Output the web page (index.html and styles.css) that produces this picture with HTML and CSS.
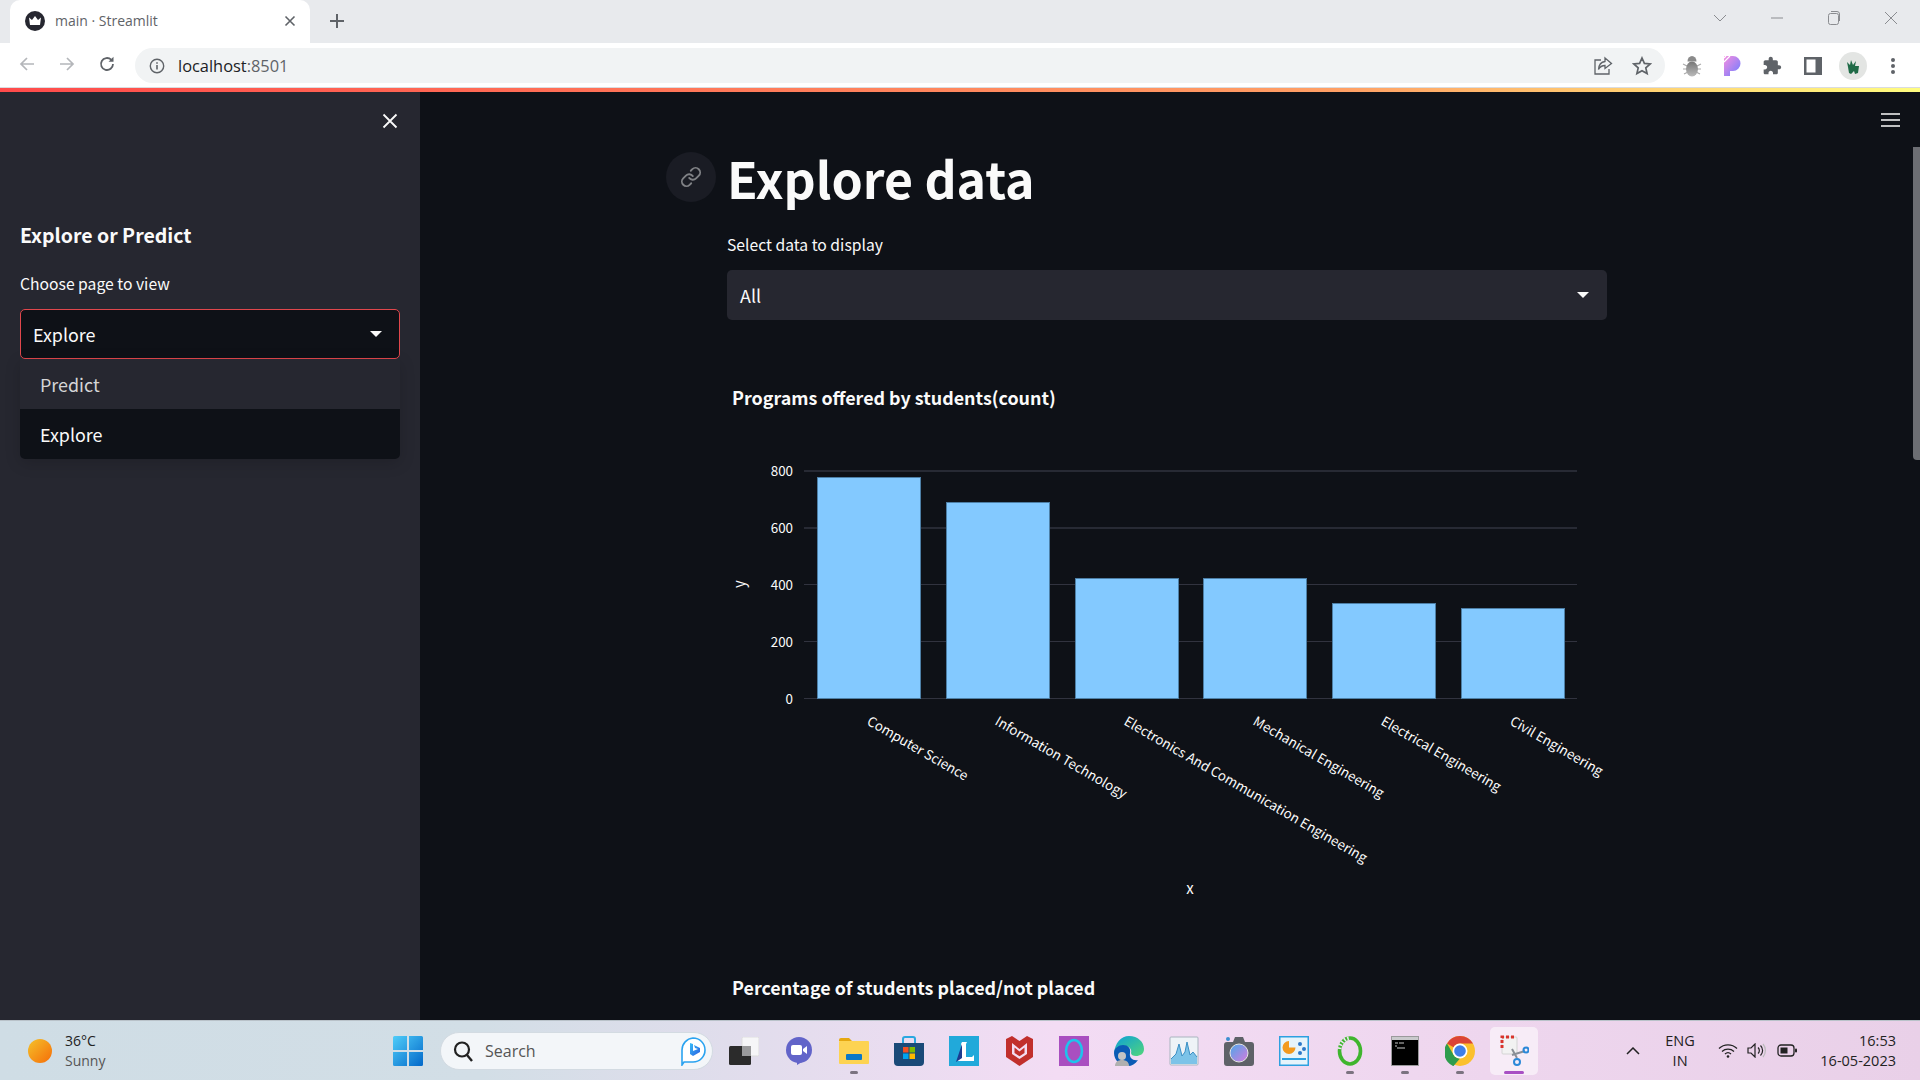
FILE: index.html
```html
<!DOCTYPE html>
<html lang="en">
<head>
  <meta charset="UTF-8">
  <title>main · Streamlit</title>
  <link rel="stylesheet" href="styles.css">
</head>
<body>
<div class="screen">

  <!-- Tab strip -->
  <div class="tabstrip">
    <div class="tab">
      <svg class="favicon" width="20" height="20" viewBox="0 0 20 20"><circle cx="10" cy="10" r="10" fill="#262730"/><path d="M4 6.500l3 2.600L10 5l3 4.100 3-2.600-1 7.500H5z" fill="#fff"/></svg>
      <span class="tab-title">main · Streamlit</span>
      <svg class="tab-close" width="12" height="12" viewBox="0 0 12 12"><path d="M1.500 1.500l9 9M10.500 1.500l-9 9" stroke="#5f6368" stroke-width="1.600"/></svg>
    </div>
    <svg class="tab-new" width="16" height="16" viewBox="0 0 16 16"><path d="M8 1v14M1 8h14" stroke="#5f6368" stroke-width="2"/></svg>
    <div class="window-btns">
      <svg width="14" height="8" viewBox="0 0 14 8"><path d="M1 1l6 6 6-6" fill="none" stroke="#8a8c90"/></svg>
      <svg width="14" height="14" viewBox="0 0 14 14"><path d="M1 7h12" stroke="#8a8c90"/></svg>
      <svg width="14" height="16" viewBox="0 0 14 16"><rect x="1.500" y="3.500" width="10" height="11" rx="2" fill="none" stroke="#8a8c90"/><path d="M4 1.500h6a2.500 2.500 0 0 1 2.500 2.500v7" fill="none" stroke="#8a8c90"/></svg>
      <svg width="14" height="14" viewBox="0 0 14 14"><path d="M1 1l12 12M13 1L1 13" stroke="#8a8c90"/></svg>
    </div>
  </div>

  <!-- Address bar row -->
  <div class="toolbar">
    <div class="nav-btns">
      <svg width="18" height="18" viewBox="0 0 18 18"><path d="M16 9H3M9 3L3 9l6 6" fill="none" stroke="#b4b6ba" stroke-width="1.700"/></svg>
      <svg width="18" height="18" viewBox="0 0 18 18"><path d="M2 9h13M9 3l6 6-6 6" fill="none" stroke="#b4b6ba" stroke-width="1.700"/></svg>
      <svg width="18" height="18" viewBox="0 0 18 18"><path d="M15 9a6 6 0 1 1-1.800-4.300" fill="none" stroke="#5f6368" stroke-width="1.800"/><path d="M15.500 1.800v5h-5z" fill="#5f6368"/></svg>
    </div>
    <div class="omnibox">
      <svg width="16" height="16" viewBox="0 0 16 16"><circle cx="8" cy="8" r="6.700" fill="none" stroke="#5f6368" stroke-width="1.400"/><path d="M8 7v4.500M8 4.200v1.600" stroke="#5f6368" stroke-width="1.600"/></svg>
      <span class="url">localhost<span class="url-port">:8501</span></span>
      <svg class="omni-share" width="20" height="20" viewBox="0 0 20 20"><path d="M8 4H2v14h14v-5" fill="none" stroke="#5f6368" stroke-width="1.300"/><path d="M12 2l6.500 5.500L12 12.500V9.500c-3 0-5 1-6.500 4 .3-4.500 2.500-7.500 6.500-8z" fill="none" stroke="#5f6368" stroke-width="1.300"/></svg>
      <svg class="omni-star" width="20" height="20" viewBox="0 0 20 20"><path d="M10 2l2.400 5.400 5.800.6-4.400 3.900 1.300 5.700L10 14.700 4.900 17.600l1.300-5.700L1.800 8l5.800-.6z" fill="none" stroke="#5f6368" stroke-width="1.700"/></svg>
    </div>
    <div class="ext-btns">
      <div class="ext-slot"><svg width="20" height="22" viewBox="0 0 20 22"><defs><linearGradient id="bug" x1="0" y1="0" x2="0" y2="1"><stop offset="0" stop-color="#777"/><stop offset="1" stop-color="#bbb"/></linearGradient></defs><path d="M1 9l4 2M19 9l-4 2M1 14h4M19 14h-4M2 19l4-2M18 19l-4-2" stroke="#aaa" stroke-width="1.200"/><ellipse cx="10" cy="14" rx="6" ry="7.500" fill="url(#bug)"/><path d="M5.500 6.500a4.500 5.500 0 0 1 9 0z" fill="#8a8a8a"/></svg></div>
      <div class="ext-slot"><svg width="18" height="22" viewBox="0 0 18 22"><defs><linearGradient id="pp" x1="0" y1="0" x2="1" y2="1"><stop offset="0" stop-color="#f78ee0"/><stop offset="1" stop-color="#6b7cff"/></linearGradient></defs><path d="M1 1h9a7.500 7.500 0 0 1 0 15H7v5H1z" fill="url(#pp)"/><path d="M1 7l6-6M1 3l2-2" stroke="#fff" stroke-width="1.200"/></svg></div>
      <div class="ext-slot"><svg width="20" height="20" viewBox="0 0 24 24"><path d="M20.500 11H19V7c0-1.100-.9-2-2-2h-4V3.500C13 2.120 11.880 1 10.500 1S8 2.120 8 3.500V5H4c-1.100 0-1.990.9-1.990 2v3.800H3.500c1.490 0 2.700 1.210 2.700 2.700s-1.210 2.700-2.700 2.700H2V20c0 1.100.9 2 2 2h3.800v-1.500c0-1.490 1.210-2.700 2.700-2.700 1.490 0 2.700 1.210 2.700 2.700V22H17c1.100 0 2-.9 2-2v-4h1.500c1.380 0 2.500-1.120 2.500-2.500S21.880 11 20.500 11z" fill="#5f6368"/></svg></div>
      <div class="ext-slot"><svg width="18" height="18" viewBox="0 0 18 18"><rect width="18" height="18" fill="#5f6368"/><rect x="2.500" y="2.500" width="9" height="13" fill="#fff"/></svg></div>
      <div class="ext-slot"><svg width="28" height="28" viewBox="0 0 28 28"><circle cx="14" cy="14" r="14" fill="#e3e5e3"/><path d="M8 10l3 3 1-5 2 5 3-4-1 5 4 0-1 7-3 1-1-3-3 3-2-1-1-6z" fill="#1f6b47"/></svg></div>
      <div class="ext-slot"><svg width="6" height="18" viewBox="0 0 6 18"><circle cx="3" cy="3" r="2" fill="#5f6368"/><circle cx="3" cy="9" r="2" fill="#5f6368"/><circle cx="3" cy="15" r="2" fill="#5f6368"/></svg></div>
    </div>
  </div>
  <div class="decoration"></div>

  <!-- Streamlit app -->
  <div class="app">
    <aside class="sidebar">
      <div class="sidebar-top">
        <svg width="16" height="16" viewBox="0 0 16 16"><path d="M1.500 1.500l13 13M14.500 1.500l-13 13" stroke="#fafafa" stroke-width="1.800"/></svg>
      </div>
      <h2 class="side-title">Explore or Predict</h2>
      <label class="field-label">Choose page to view</label>
      <div class="select select-focus">
        <span>Explore</span>
        <span class="caret"></span>
      </div>
      <div class="menu">
        <div class="menu-item menu-dim">Predict</div>
        <div class="menu-item menu-active">Explore</div>
      </div>
    </aside>

    <main class="main">
      <svg class="hamburger" width="19" height="14" viewBox="0 0 19 14"><path d="M0 1h19M0 7h19M0 13h19" stroke="#fafafa" stroke-width="1.700"/></svg>
      <div class="scroll-thumb"></div>

      <div class="content">
        <div class="heading-row">
          <div class="anchor">
            <svg width="22" height="22" viewBox="0 0 24 24" fill="none" stroke="#808286" stroke-width="2" stroke-linecap="round"><path d="M10 13a5 5 0 0 0 7.540.54l3-3a5 5 0 0 0-7.070-7.070l-1.720 1.710"/><path d="M14 11a5 5 0 0 0-7.540-.54l-3 3a5 5 0 0 0 7.070 7.070l1.710-1.710"/></svg>
          </div>
          <h1>Explore data</h1>
        </div>
        <label class="field-label">Select data to display</label>
        <div class="select select-plain">
          <span>All</span>
          <span class="caret"></span>
        </div>

        <h4 class="chart-title">Programs offered by students(count)</h4>
        <svg class="chart" width="880" height="540" viewBox="727 420 880 540">
          <g stroke="#31333f">
            <path d="M804 470h773M804 527h773" stroke-width="1.400"/>
            <path d="M804 583.500h773M804 640.500h773M804 697.500h773"/>
          </g>
          <g fill="#83c9ff" stroke="#4d7fa6" stroke-width="1">
            <rect x="817.500" y="476.500" width="103" height="221"/>
            <rect x="946.500" y="501.500" width="103" height="196"/>
            <rect x="1075.500" y="577.500" width="103" height="120"/>
            <rect x="1203.500" y="577.500" width="103" height="120"/>
            <rect x="1332.500" y="602.500" width="103" height="95"/>
            <rect x="1461.500" y="607.500" width="103" height="90"/>
          </g>
          <g class="tick" text-anchor="end">
            <text x="793" y="475">800</text>
            <text x="793" y="532">600</text>
            <text x="793" y="589">400</text>
            <text x="793" y="646">200</text>
            <text x="793" y="703">0</text>
          </g>
          <g class="tick">
            <text transform="translate(866 723) rotate(30)">Computer Science</text>
            <text transform="translate(994 723) rotate(30)">Information Technology</text>
            <text transform="translate(1123 723) rotate(30)">Electronics And Communication Engineering</text>
            <text transform="translate(1252 723) rotate(30)">Mechanical Engineering</text>
            <text transform="translate(1380 723) rotate(30)">Electrical Engineering</text>
            <text transform="translate(1509 723) rotate(30)">Civil Engineering</text>
          </g>
          <text class="axis-title" x="1190" y="893" text-anchor="middle">x</text>
          <text class="axis-title" transform="translate(745 583) rotate(-90)" text-anchor="middle">y</text>
        </svg>
        <h4 class="chart-title chart-title-next">Percentage of students placed/not placed</h4>
      </div>
    </main>
  </div>

  <!-- Windows taskbar -->
  <footer class="taskbar">
    <div class="weather">
      <svg width="24" height="24" viewBox="0 0 24 24"><defs><linearGradient id="sun" x1="0" y1="0" x2="1" y2="1"><stop offset="0" stop-color="#f4c22b"/><stop offset="1" stop-color="#f66d08"/></linearGradient></defs><circle cx="12" cy="12" r="12" fill="url(#sun)"/></svg>
      <div class="weather-text">
        <div>36°C</div>
        <div class="weather-sub">Sunny</div>
      </div>
    </div>

    <div class="task-center">
      <svg class="start" width="30" height="30" viewBox="0 0 30 30"><defs><linearGradient id="win" x1="0" y1="0" x2="1" y2="1"><stop offset="0" stop-color="#4fcdf9"/><stop offset="1" stop-color="#0368c9"/></linearGradient></defs><path d="M0 1.500A1.500 1.500 0 0 1 1.500 0H14v14H0zM16 0h12.500A1.500 1.500 0 0 1 30 1.500V14H16zM0 16h14v14H1.500A1.500 1.500 0 0 1 0 28.500zM16 16h14v12.500a1.500 1.500 0 0 1-1.500 1.500H16z" fill="url(#win)"/></svg>

      <div class="search">
        <svg width="20" height="22" viewBox="0 0 20 22"><circle cx="9" cy="9.500" r="7" fill="none" stroke="#222" stroke-width="2.200"/><path d="M14 15l5 6" stroke="#222" stroke-width="2.400"/></svg>
        <span>Search</span>
        <svg class="bing" width="26" height="30" viewBox="0 0 26 30"><defs><linearGradient id="bingg" x1="0" y1="0" x2="1" y2="1"><stop offset="0" stop-color="#37bdf8"/><stop offset="1" stop-color="#2a5fe0"/></linearGradient></defs><path d="M13 2a12 12 0 0 1 0 24H4l-2 3V14A12 12 0 0 1 13 2z" fill="#fff" stroke="#2aa3f0" stroke-width="1.600"/><path d="M10 7l3 1v7l5-2-3-1-1-3 6 3v4l-7 4-3-2z" fill="url(#bingg)"/></svg>
      </div>

      <div class="task-icon"><svg width="30" height="28" viewBox="0 0 30 28"><rect x="13" y="0" width="17" height="19" rx="1.500" fill="#f6f6f8" stroke="#ddd"/><rect x="0" y="9" width="22" height="19" rx="1.500" fill="#2b2b2b"/><rect x="13" y="9" width="9" height="10" fill="#9a9a9c"/></svg></div>
      <div class="task-icon"><svg width="30" height="28" viewBox="0 0 30 28"><circle cx="15" cy="13" r="13" fill="#6264c9"/><path d="M13 25l0 3 5-3z" fill="#6264c9"/><rect x="7" y="8" width="11" height="10" rx="2" fill="#fff"/><path d="M19 12l4-3v8l-4-3z" fill="#fff"/></svg></div>
      <div class="task-icon running"><svg width="30" height="27" viewBox="0 0 30 27"><path d="M0 3a2 2 0 0 1 2-2h8l3 3H0z" fill="#e6a810"/><rect y="4" width="30" height="23" rx="1" fill="#fdd352"/><rect x="7" y="17" width="16" height="6" rx="1" fill="#0b78c8"/></svg></div>
      <div class="task-icon"><svg width="30" height="30" viewBox="0 0 30 30"><path d="M9 7V3a2 2 0 0 1 2-2h8a2 2 0 0 1 2 2v4" fill="none" stroke="#2aa8e0" stroke-width="2"/><path d="M0 7h30v19a4 4 0 0 1-4 4H4a4 4 0 0 1-4-4z" fill="#1a4a78"/><rect x="9" y="11" width="5.500" height="5.500" fill="#f25022"/><rect x="15.500" y="11" width="5.500" height="5.500" fill="#7fba00"/><rect x="9" y="17.500" width="5.500" height="5.500" fill="#00a4ef"/><rect x="15.500" y="17.500" width="5.500" height="5.500" fill="#ffb900"/></svg></div>
      <div class="task-icon"><svg width="30" height="30" viewBox="0 0 30 30"><rect width="30" height="30" fill="#21a9da"/><path d="M13 6h5l-1 2v13h6l2-2v6H8l4-3V8z" fill="#fff"/><path d="M13 8v14l-6 4z" fill="#1c3b8f"/></svg></div>
      <div class="task-icon"><svg width="27" height="30" viewBox="0 0 27 30"><path d="M0 3l6-3 7.500 5L21 0l6 3v18l-13.500 9L0 21z" fill="#c12f2c"/><path d="M6 7v11l7.500 5 7.500-5V7l-7.500 6z" fill="#f3dcf1"/><path d="M8.500 11.500v5.500l5 3.300 5-3.300v-5.500l-5 4z" fill="#c12f2c"/></svg></div>
      <div class="task-icon"><svg width="30" height="30" viewBox="0 0 30 30"><rect width="30" height="30" fill="#a94fc0"/><ellipse cx="15" cy="15" rx="8" ry="11" fill="none" stroke="#1fc3ec" stroke-width="2.600"/></svg></div>
      <div class="task-icon"><svg width="30" height="30" viewBox="0 0 30 30"><defs><linearGradient id="edge1" x1="0" y1="0" x2="1" y2="1"><stop offset="0" stop-color="#0c9fd8"/><stop offset="1" stop-color="#52d67a"/></linearGradient></defs><path d="M15 0c9 0 15 6 15 13 0 5-4 7-8 7-3 0-5-1-5-3 1-3-1-7-6-7-5 0-9 3-11 7C1 7 7 0 15 0z" fill="url(#edge1)"/><path d="M0 17c0-5 5-8 9-8 5 0 8 3 7 8-1 5 3 8 8 7-3 4-6 6-10 6C6 30 0 24 0 17z" fill="#0b5bb5"/><circle cx="8" cy="20" r="4" fill="#c4c4c4"/><path d="M1 30c0-4 3-6 7-6s7 2 7 6z" fill="#b0b0b0"/></svg></div>
      <div class="task-icon"><svg width="30" height="30" viewBox="0 0 30 30"><rect x="1" y="1" width="28" height="28" rx="1" fill="#eef3f7" stroke="#a9b4bf"/><path d="M2 23l5-5 3-10 3 12 3-4 2-10 3 13 3-3 4 5v7H2z" fill="#7cc3e8"/><path d="M2 23l5-5 3-10 3 12 3-4 2-10 3 13 3-3 4 5" fill="none" stroke="#3b8fc4"/></svg></div>
      <div class="task-icon"><svg width="30" height="30" viewBox="0 0 30 30"><defs><linearGradient id="lens" x1="0" y1="0" x2="1" y2="1"><stop offset="0" stop-color="#4aa8e8"/><stop offset="1" stop-color="#d77ae0"/></linearGradient></defs><path d="M3 6h6l2-5h8l2 5h6a3 3 0 0 1 3 3v18a3 3 0 0 1-3 3H3a3 3 0 0 1-3-3V9a3 3 0 0 1 3-3z" fill="#5e6268"/><circle cx="4" cy="3" r="2" fill="#3b8fd0"/><circle cx="15" cy="17" r="9" fill="url(#lens)" stroke="#e5e5e5"/></svg></div>
      <div class="task-icon"><svg width="30" height="30" viewBox="0 0 30 30"><rect x="0.500" y="0.500" width="29" height="29" fill="#e6f4fb" stroke="#2da0e0" stroke-width="2"/><path d="M10 5a6.500 6.500 0 1 0 6.500 6.500H10z" fill="#f39a1e"/><rect x="3" y="22" width="24" height="2" fill="#2da0e0"/><circle cx="21" cy="8" r="2" fill="#2d78c8"/><circle cx="25" cy="13" r="2" fill="#2d78c8"/><circle cx="21" cy="17" r="2" fill="#2d78c8"/></svg></div>
      <div class="task-icon running"><svg width="26" height="30" viewBox="0 0 26 30"><ellipse cx="13" cy="15" rx="10.500" ry="13" fill="none" stroke="#3fb52e" stroke-width="3.600"/><path d="M2.500 13A11 13 0 0 1 12 2" fill="none" stroke="#efe3f2" stroke-width="3.800" stroke-dasharray="1.600 1.800"/></svg></div>
      <div class="task-icon running"><svg width="28" height="30" viewBox="0 0 28 30"><rect x="0.500" y="0.500" width="27" height="29" fill="#000" stroke="#9a9a9c"/><rect x="1" y="1" width="26" height="3" fill="#c9c9cc"/><path d="M4 7h3M8 7h5M4 10h2M6 12h8" stroke="#c8c8c8"/></svg></div>
      <div class="task-icon running"><svg width="30" height="30" viewBox="0 0 30 30"><circle cx="15" cy="15" r="15" fill="#fbc02d"/><path d="M15 0a15 15 0 0 1 13 7.500H15a7.500 7.500 0 0 0-6.500 3.750L2 7.500A15 15 0 0 1 15 0z" fill="#db4437"/><path d="M2 7.500l6.500 11.250A7.500 7.500 0 0 0 15 22.500L8.500 30h-.5A15 15 0 0 1 2 7.500z" fill="#2e9c4d"/><circle cx="15" cy="15" r="7.500" fill="#fff"/><circle cx="15" cy="15" r="5.800" fill="#3f7fe8"/></svg></div>
      <div class="task-icon snip">
        <svg width="30" height="32" viewBox="0 0 30 32"><rect x="3" y="2" width="15" height="17" rx="1" fill="#f2f2f2" stroke="#d4d4d4"/><path d="M3 13V2h14" fill="none" stroke="#d8342c" stroke-width="3" stroke-dasharray="3 2"/><path d="M13 14l5 9M13 20l13-4" stroke="#8a8f96" stroke-width="2"/><circle cx="27" cy="15" r="2.500" fill="none" stroke="#2b88d8" stroke-width="2"/><circle cx="18" cy="27" r="3" fill="none" stroke="#2b88d8" stroke-width="2"/></svg>
      </div>
    </div>

    <div class="tray">
      <svg class="tray-up" width="14" height="8" viewBox="0 0 14 8"><path d="M1 7l6-6 6 6" fill="none" stroke="#222" stroke-width="1.500"/></svg>
      <div class="lang">ENG<br>IN</div>
      <svg class="tray-wifi" width="20" height="15" viewBox="0 0 20 15"><path d="M1 5.500a13 13 0 0 1 18 0M4 8.500a9 9 0 0 1 12 0M7 11a4.500 4.500 0 0 1 6 0" fill="none" stroke="#222" stroke-width="1.300"/><circle cx="10" cy="13.500" r="1.300" fill="#222"/></svg>
      <svg class="tray-vol" width="20" height="15" viewBox="0 0 20 15"><path d="M1 5h3l4-4v13l-4-4H1z" fill="none" stroke="#222" stroke-width="1.200"/><path d="M11 4.500a4 4 0 0 1 0 6M13.500 2.500a7 7 0 0 1 0 10" fill="none" stroke="#222" stroke-width="1.200"/><path d="M16 1a10 10 0 0 1 0 13" fill="none" stroke="#bbb" stroke-width="1.200"/></svg>
      <svg class="tray-batt" width="20" height="13" viewBox="0 0 20 13"><rect x="1" y="1" width="16" height="11" rx="3" fill="none" stroke="#222" stroke-width="1.300"/><rect x="3.500" y="3.500" width="7" height="6" fill="#222"/><rect x="18" y="4.500" width="2" height="4" rx="1" fill="#222"/></svg>
      <div class="clock">16:53<br>16-05-2023</div>
    </div>
  </footer>
</div>
</body>
</html>
```

FILE: styles.css
```css
/* Page frame */
html, body {
  margin: 0;
  height: 100%;
  overflow: hidden;
}
.screen {
  width: 1920px;
  height: 1080px;
  display: flex;
  flex-direction: column;
  font-family: "Open Sans", "Noto Sans", sans-serif;
}

/* Browser chrome */
.tabstrip {
  height: 43px;
  flex: none;
  display: flex;
  align-items: center;
  background: #e8eaed;
}
.tab {
  width: 300px;
  height: 43px;
  margin-left: 10px;
  padding: 0 14px 2px 15px;
  box-sizing: border-box;
  display: flex;
  align-items: center;
  background: #fff;
  border-radius: 10px 10px 0 0;
}
.tab-title {
  margin-left: 10px;
  font-size: 14px;
  color: #5f6368;
}
.tab-close {
  margin-left: auto;
}
.tab-new {
  margin: 0 0 2px 19px;
}
.window-btns {
  margin-left: auto;
  margin-bottom: 7px;
  display: flex;
  align-items: center;
  gap: 43px;
  padding-right: 22px;
}
.toolbar {
  height: 45px;
  flex: none;
  box-sizing: border-box;
  padding-bottom: 3px;
  display: flex;
  align-items: center;
  background: #fff;
  border-bottom: 1px solid #dadce0;
}
.nav-btns {
  width: 135px;
  padding-left: 18px;
  box-sizing: border-box;
  display: flex;
  gap: 22px;
}
.omnibox {
  width: 1530px;
  height: 35px;
  margin-top: 4px;
  padding: 0 13px 0 14px;
  box-sizing: border-box;
  display: flex;
  align-items: center;
  background: #f1f3f4;
  border-radius: 18px;
}
.url {
  margin-left: 13px;
  font-size: 16.400px;
  color: #202124;
}
.url-port {
  color: #5f6368;
}
.omni-share {
  margin-left: auto;
}
.omni-star {
  margin-left: 19px;
}
.ext-btns {
  margin-left: 7px;
  margin-top: 4px;
  display: flex;
  align-items: center;
}
.ext-slot {
  width: 40.200px;
  display: flex;
  align-items: center;
  justify-content: center;
}
.decoration {
  height: 4px;
  flex: none;
  background: linear-gradient(90deg, #ff4b4b, #ffa065 70%, #fffd80);
}

/* Streamlit app */
.app {
  flex: 1;
  min-height: 0;
  display: flex;
  font-family: "Noto Sans CJK SC", "Source Sans Pro", sans-serif;
  color: #fafafa;
  background: #0e1117;
}
.sidebar {
  width: 420px;
  flex: none;
  padding: 0 20px;
  box-sizing: border-box;
  background: #262730;
}
.sidebar-top {
  height: 37px;
  display: flex;
  align-items: flex-end;
  justify-content: flex-end;
  padding-right: 2px;
}
.side-title {
  margin: 91px 0 0;
  font-size: 19.500px;
  line-height: 30px;
  font-weight: 700;
}
.field-label {
  display: block;
  font-size: 15.700px;
  line-height: 24px;
}
.sidebar .field-label {
  margin-top: 22px;
}
.select {
  height: 50px;
  margin-top: 13px;
  box-sizing: border-box;
  display: flex;
  align-items: center;
  justify-content: space-between;
  font-size: 17.900px;
  border-radius: 5px;
}
.select-focus {
  padding: 0 17px 0 12px;
  background: #0e1117;
  border: 1px solid #e0474c;
}
.select-plain {
  padding: 0 18px 0 13px;
  background: #262730;
}
.caret {
  width: 0;
  height: 0;
  border-left: 6px solid transparent;
  border-right: 6px solid transparent;
  border-top: 6px solid #fafafa;
}
.menu {
  overflow: hidden;
  background: #262730;
  border-radius: 0 0 5px 5px;
  box-shadow: 0 4px 16px rgba(0, 0, 0, 0.16);
}
.menu-item {
  height: 50px;
  padding-left: 20px;
  display: flex;
  align-items: center;
  font-size: 17.900px;
}
.menu-dim {
  color: #d5d5d6;
}
.menu-active {
  background: #0e1117;
}

.main {
  flex: 1;
  min-width: 0;
  position: relative;
  overflow: hidden;
}
.hamburger {
  position: absolute;
  top: 21px;
  right: 20px;
}
.scroll-thumb {
  position: absolute;
  top: 55px;
  right: 0;
  width: 7px;
  height: 313px;
  background: #6c6e73;
  border-radius: 0 0 0 4px;
}
.content {
  width: 880px;
  margin-left: 307px;
}
.heading-row {
  position: relative;
  padding-top: 50px;
}
.anchor {
  position: absolute;
  left: -61px;
  top: 60px;
  width: 50px;
  height: 50px;
  display: flex;
  align-items: center;
  justify-content: center;
  background: #1a1c24;
  border-radius: 50%;
}
h1 {
  margin: 0;
  font-size: 50px;
  line-height: 70px;
  font-weight: 700;
}
.content .field-label {
  margin-top: 21px;
}
.chart-title {
  margin: 64px 0 0 5px;
  font-size: 17.900px;
  line-height: 26px;
  font-weight: 700;
}
.chart {
  display: block;
  margin-top: 11px;
}
.tick {
  font-size: 13.400px;
  fill: #fafafa;
}
.axis-title {
  font-size: 15px;
  fill: #fafafa;
}
.chart-title-next {
  margin-top: 13px;
}

/* Windows taskbar */
.taskbar {
  height: 60px;
  flex: none;
  box-sizing: border-box;
  display: flex;
  align-items: center;
  border-top: 1px solid #b9c2c9;
  background: linear-gradient(90deg, #cfdde5, #d2dee6 25%, #f3dcf4 55%, #e9d0e8);
}
.weather {
  width: 393px;
  flex: none;
  padding-left: 28px;
  box-sizing: border-box;
  display: flex;
  align-items: center;
  gap: 13px;
}
.weather-text {
  font-size: 14px;
  line-height: 20px;
  color: #222;
}
.weather-sub {
  color: #555;
}
.task-center {
  display: flex;
  align-items: center;
}
.start {
  margin-right: 17px;
}
.search {
  width: 273px;
  height: 38px;
  padding: 0 6px 0 12px;
  box-sizing: border-box;
  display: flex;
  align-items: center;
  gap: 12px;
  font-size: 16px;
  color: #555;
  background: #f3f6f9;
  border: 1px solid #d3dbe2;
  border-radius: 19px;
}
.bing {
  margin-left: auto;
}
.task-icon {
  width: 55.100px;
  height: 48px;
  flex: none;
  position: relative;
  display: flex;
  align-items: center;
  justify-content: center;
}
.search + .task-icon {
  margin-left: 3px;
}
.running::after,
.snip::after {
  content: "";
  position: absolute;
  left: 50%;
  bottom: 1px;
  width: 8px;
  height: 3px;
  margin-left: -4px;
  background: #7b7380;
  border-radius: 2px;
}
.snip {
  width: 48px;
  margin-left: 3px;
  background: rgba(255, 255, 255, 0.55);
  border-radius: 5px;
}
.snip::after {
  width: 20px;
  margin-left: -10px;
  background: #a850c4;
}
.tray {
  flex: 1;
  padding-right: 24px;
  display: flex;
  align-items: center;
  color: #222;
  font-size: 14.500px;
}
.tray-up {
  margin-left: 88px;
}
.lang {
  margin-left: 25px;
  text-align: center;
  line-height: 20px;
}
.tray-wifi {
  margin-left: 23px;
}
.tray-vol {
  margin-left: 9px;
}
.tray-batt {
  margin-left: 10px;
}
.clock {
  margin-left: auto;
  text-align: right;
  line-height: 20px;
}
```
